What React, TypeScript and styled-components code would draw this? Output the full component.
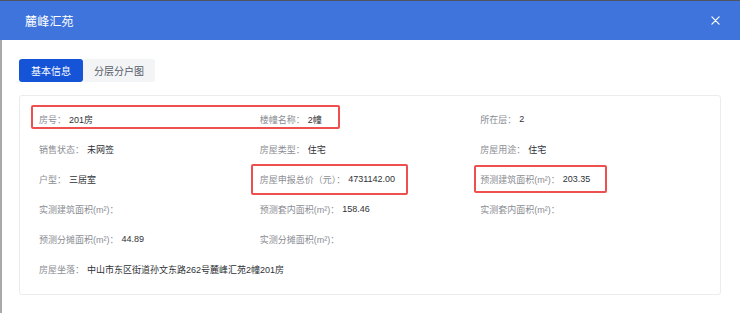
import styled, { createGlobalStyle } from "styled-components";

const GlobalStyle = createGlobalStyle`
    html, body {
        margin: 0;
        padding: 0;
        background: #ffffff;
    }
    body {
        font-family: "Liberation Sans", "Noto Sans CJK SC", sans-serif;
    }
`;

const Modal = styled.div`
    display: flex;
    flex-direction: column;
    width: 740px;
    height: 313px;
    background: #ffffff;
    overflow: hidden;
`;

const Header = styled.div`
    display: flex;
    align-items: center;
    justify-content: space-between;
    height: 39px;
    padding: 0 20px 0 25px;
    background-color: #3e74dc;
    border-top: 1px solid #4f5560;
`;

const Title = styled.div`
    font-size: 12px;
    color: #ffffff;
    letter-spacing: 0.2px;
`;

const Close = styled.div`
    display: flex;
    align-items: center;
    justify-content: center;
    width: 10px;
    height: 10px;
`;

const Body = styled.div`
    flex: 1;
    display: flex;
    flex-direction: column;
    gap: 13px;
    padding: 19px 17px 0 17px;
    border-left: 2px solid #a9a9a9;
`;

const Tabs = styled.div`
    display: flex;
`;

const Tab = styled.div<{ $active?: boolean }>`
    display: flex;
    align-items: center;
    height: 23px;
    padding: 0 ${p => (p.$active ? "12px" : "11px")};
    font-size: 10px;
    border-radius: 3px;
    color: ${p => (p.$active ? "#ffffff" : "#555b66")};
    background-color: ${p => (p.$active ? "#1553d7" : "#f3f4f6")};
`;

const Card = styled.div`
    position: relative;
    width: 702px;
    box-sizing: border-box;
    padding: 8px 19px 10px 19px;
    border: 1px solid #ececec;
    border-radius: 3px;
    display: grid;
    grid-template-columns: repeat(3, 1fr);
    grid-auto-rows: 30px;
`;

const Item = styled.div<{ $span?: number }>`
    display: flex;
    align-items: center;
    font-size: 9px;
    grid-column: span ${p => p.$span ?? 1};
`;

const Label = styled.span`
    color: #8a8d93;
    margin-right: 3px;
`;

const Value = styled.span`
    color: #2f3237;
`;

const Mark = styled.div<{ $l: number; $t: number; $w: number; $h: number }>`
    position: absolute;
    left: ${p => p.$l}px;
    top: ${p => p.$t}px;
    width: ${p => p.$w}px;
    height: ${p => p.$h}px;
    box-sizing: border-box;
    border: 2px solid #ee5050;
    border-radius: 2px;
    pointer-events: none;
`;

const items: { label: string; value?: string; span?: number }[] = [
    { label: "房号：", value: "201房" },
    { label: "楼幢名称：", value: "2幢" },
    { label: "所在层：", value: "2" },
    { label: "销售状态：", value: "未网签" },
    { label: "房屋类型：", value: "住宅" },
    { label: "房屋用途：", value: "住宅" },
    { label: "户型：", value: "三居室" },
    { label: "房屋申报总价（元）：", value: "4731142.00" },
    { label: "预测建筑面积(m²)：", value: "203.35" },
    { label: "实测建筑面积(m²)：" },
    { label: "预测套内面积(m²)：", value: "158.46" },
    { label: "实测套内面积(m²)：" },
    { label: "预测分摊面积(m²)：", value: "44.89" },
    { label: "实测分摊面积(m²)：", span: 2 },
    { label: "房屋坐落：", value: "中山市东区街道孙文东路262号麓峰汇苑2幢201房", span: 3 },
];

export default function App() {
    return (
        <>
            <GlobalStyle />
            <Modal>
                <Header>
                    <Title>麓峰汇苑</Title>
                    <Close>
                        <svg width="9" height="9" viewBox="0 0 10 10">
                            <path d="M1 1 L9 9 M9 1 L1 9" stroke="#ffffff" strokeWidth="1.3" strokeLinecap="round" />
                        </svg>
                    </Close>
                </Header>
                <Body>
                    <Tabs>
                        <Tab $active>基本信息</Tab>
                        <Tab>分层分户图</Tab>
                    </Tabs>
                    <Card>
                        {items.map(it => (
                            <Item key={it.label} $span={it.span}>
                                <Label>{it.label}</Label>
                                {it.value && <Value>{it.value}</Value>}
                            </Item>
                        ))}
                        <Mark $l={11} $t={9} $w={309} $h={24} />
                        <Mark $l={231} $t={68} $w={157} $h={31} />
                        <Mark $l={454} $t={69} $w={133} $h={28} />
                    </Card>
                </Body>
            </Modal>
        </>
    );
}
